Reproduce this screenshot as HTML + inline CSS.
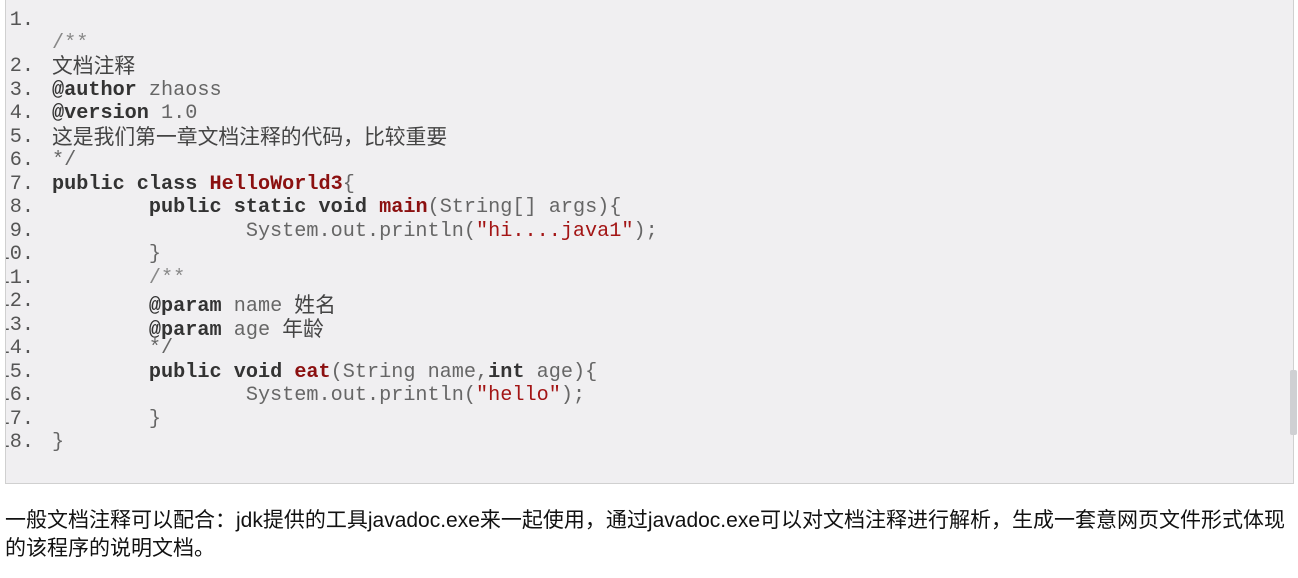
<!DOCTYPE html>
<html><head><meta charset="utf-8"><style>
body{margin:0;width:1298px;height:578px;background:#fff;overflow:hidden;position:relative;font-family:"Liberation Mono","Noto Sans CJK SC",monospace;}
.box{position:absolute;left:5px;top:-2px;width:1287px;height:485px;background:#f0eff1;border:1px solid #d0d0d0;border-top:none;overflow:hidden;}
.l{position:absolute;left:0;height:24px;line-height:24px;font-size:20.2px;color:#666;white-space:pre;}
.n{position:absolute;width:42px;text-align:right;left:-14px;color:#555}
.c{position:absolute;left:46px;}
b{color:#333}
.r{color:#8b1010;font-weight:bold}
.s{color:#a31515}
.cj{font-family:"Noto Sans CJK SC",sans-serif;font-size:20.8px;color:#444;position:relative;top:-3px}
.ci{font-family:"Noto Sans CJK SC",sans-serif;font-size:20.8px;color:#444;position:relative;top:1px}
.sb{position:absolute;left:1290px;top:370px;width:7px;height:65px;background:#cfd0d3;border-radius:2px}
.p{position:absolute;left:5px;font-family:"Liberation Sans","Noto Sans CJK SC",sans-serif;font-size:21px;color:#111;white-space:nowrap;}
</style></head><body>
<div class="box">
<div class="l" style="top:11px"><span class="n">1.</span></div>
<div class="l" style="top:34px"><span class="c" style="color:#888">/**</span></div>
<div class="l" style="top:57px"><span class="n">2.</span><span class="c cj">文档注释</span></div>
<div class="l" style="top:81px"><span class="n">3.</span><span class="c"><b>@author</b> zhaoss</span></div>
<div class="l" style="top:104px"><span class="n">4.</span><span class="c"><b>@version</b> 1.0</span></div>
<div class="l" style="top:128px"><span class="n">5.</span><span class="c cj">这是我们第一章文档注释的代码，比较重要</span></div>
<div class="l" style="top:151px"><span class="n">6.</span><span class="c">*/</span></div>
<div class="l" style="top:175px"><span class="n">7.</span><span class="c"><b>public class</b> <span class="r">HelloWorld3</span>{</span></div>
<div class="l" style="top:198px"><span class="n">8.</span><span class="c">        <b>public static void</b> <span class="r">main</span>(String[] args){</span></div>
<div class="l" style="top:222px"><span class="n">9.</span><span class="c">                System.out.println(<span class="s">"hi....java1"</span>);</span></div>
<div class="l" style="top:245px"><span class="n">10.</span><span class="c">        }</span></div>
<div class="l" style="top:269px"><span class="n">11.</span><span class="c" style="color:#888">        /**</span></div>
<div class="l" style="top:292px"><span class="n">12.</span><span class="c">        <b>@param</b> name <span class="ci">姓名</span></span></div>
<div class="l" style="top:316px"><span class="n">13.</span><span class="c">        <b>@param</b> age <span class="ci">年龄</span></span></div>
<div class="l" style="top:339px"><span class="n">14.</span><span class="c">        */</span></div>
<div class="l" style="top:363px"><span class="n">15.</span><span class="c">        <b>public void</b> <span class="r">eat</span>(String name,<b>int</b> age){</span></div>
<div class="l" style="top:386px"><span class="n">16.</span><span class="c">                System.out.println(<span class="s">"hello"</span>);</span></div>
<div class="l" style="top:410px"><span class="n">17.</span><span class="c">        }</span></div>
<div class="l" style="top:433px"><span class="n">18.</span><span class="c">}</span></div>
</div>
<div class="sb"></div>
<div class="p" style="top:504px">一般文档注释可以配合：jdk提供的工具javadoc.exe来一起使用，通过javadoc.exe可以对文档注释进行解析，生成一套意网页文件形式体现</div>
<div class="p" style="top:532px">的该程序的说明文档。</div>
</body></html>
